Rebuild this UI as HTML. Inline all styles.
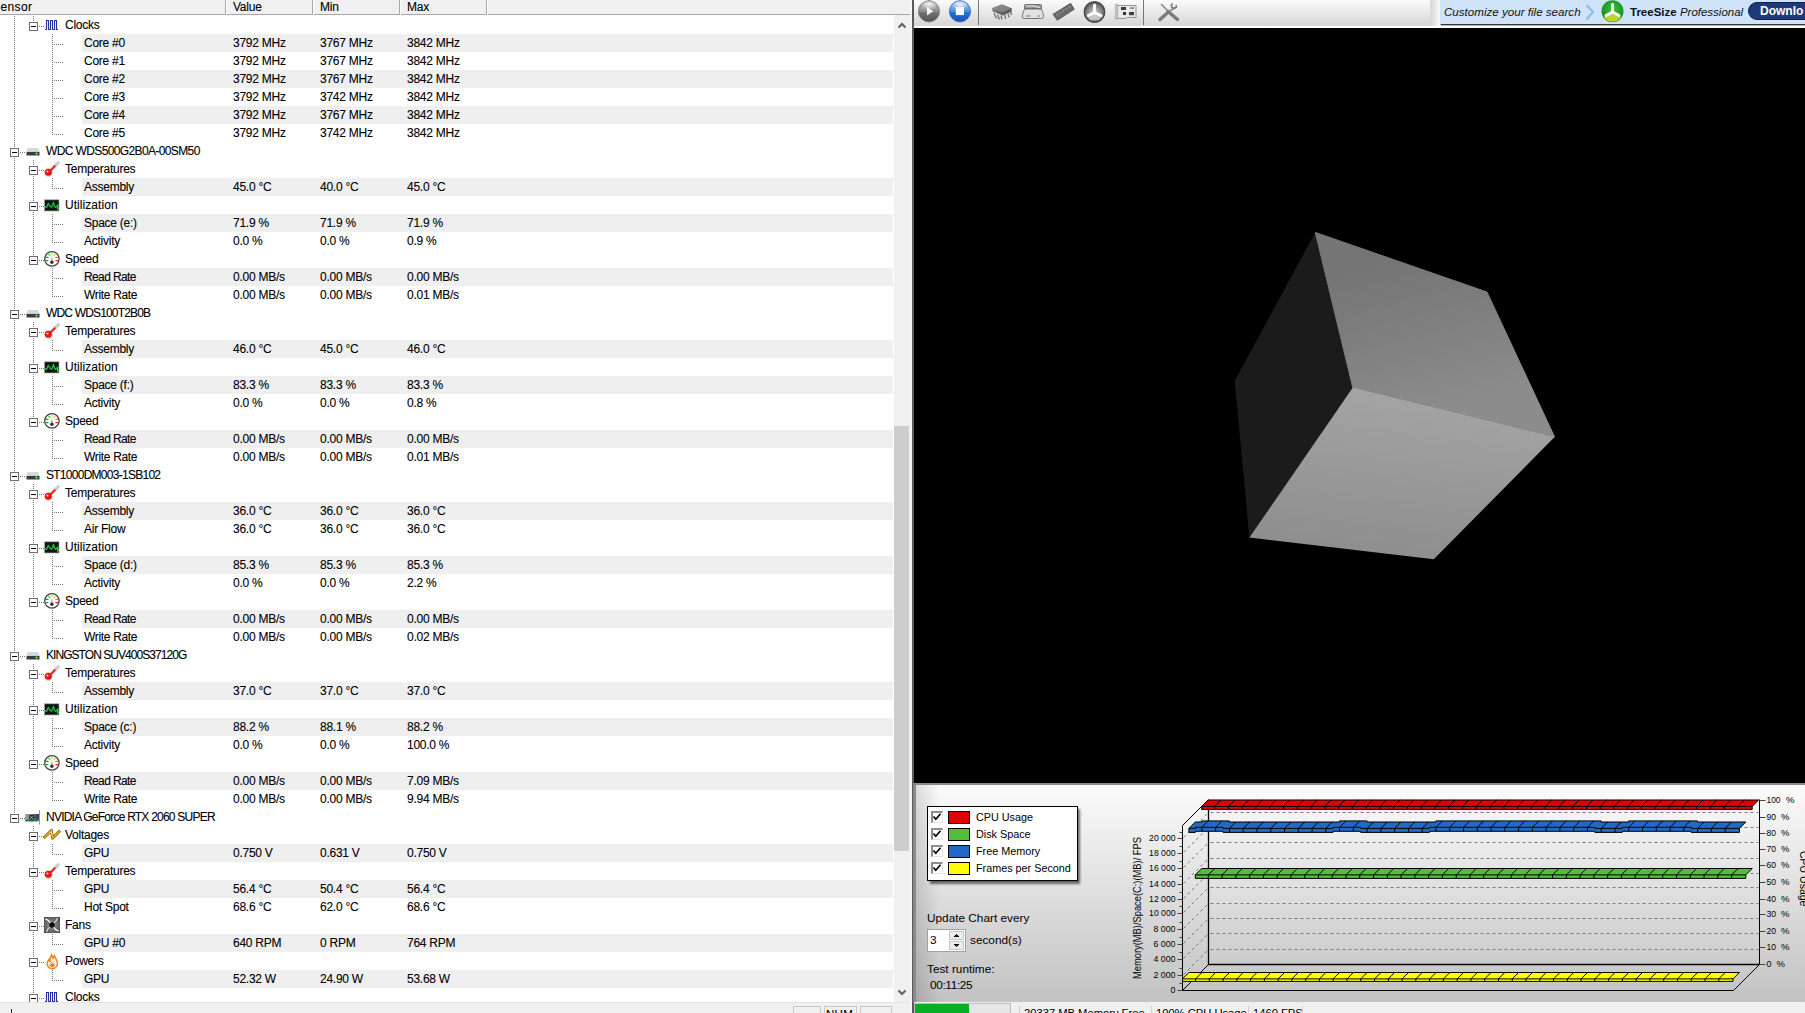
<!DOCTYPE html><html><head><meta charset="utf-8"><style>
*{margin:0;padding:0;box-sizing:border-box}
html,body{width:1805px;height:1013px;overflow:hidden;background:#fff;font-family:"Liberation Sans", sans-serif;}
.a{position:absolute}
.t{position:absolute;font-size:12px;letter-spacing:-0.25px;line-height:18px;white-space:nowrap;color:#000;-webkit-text-stroke:0.1px #000}
.sh{position:absolute;left:82px;width:811px;height:18px;background:#efefef}
.bx{position:absolute;width:9px;height:9px;border:1px solid #6e6e6e;background:#fff}
.bx::after{content:"";position:absolute;left:1px;top:3px;width:5px;height:1px;background:#000}
.vd{position:absolute;width:1px;background:repeating-linear-gradient(to bottom,#777 0 1px,transparent 1px 2px)}
.hd{position:absolute;height:1px;background:repeating-linear-gradient(to right,#777 0 1px,transparent 1px 2px)}

</style></head><body>
<div class="a" style="left:0;top:0;width:912px;height:1013px;background:#fff;overflow:hidden">
<div class="sh" style="top:34px"></div>
<div class="sh" style="top:70px"></div>
<div class="sh" style="top:106px"></div>
<div class="sh" style="top:178px"></div>
<div class="sh" style="top:214px"></div>
<div class="sh" style="top:268px"></div>
<div class="sh" style="top:340px"></div>
<div class="sh" style="top:376px"></div>
<div class="sh" style="top:430px"></div>
<div class="sh" style="top:502px"></div>
<div class="sh" style="top:556px"></div>
<div class="sh" style="top:610px"></div>
<div class="sh" style="top:682px"></div>
<div class="sh" style="top:718px"></div>
<div class="sh" style="top:772px"></div>
<div class="sh" style="top:844px"></div>
<div class="sh" style="top:880px"></div>
<div class="sh" style="top:934px"></div>
<div class="sh" style="top:970px"></div>
<div class="t" style="left:65px;top:16px">Clocks</div>
<svg style="position:absolute;left:43px;top:18px;overflow:visible" width="16" height="16" viewBox="0 0 16 16"><path d="M2 11.5H3.5V2.5H5.5V11.5H7.5V2.5H9.5V11.5H11.5V2.5H13.5V11.5H15" fill="none" stroke="#2530a0" stroke-width="1.1"/></svg>
<div class="t" style="left:84px;top:34px">Core #0</div>
<div class="t" style="left:233px;top:34px">3792 MHz</div>
<div class="t" style="left:320px;top:34px">3767 MHz</div>
<div class="t" style="left:407px;top:34px">3842 MHz</div>
<div class="t" style="left:84px;top:52px">Core #1</div>
<div class="t" style="left:233px;top:52px">3792 MHz</div>
<div class="t" style="left:320px;top:52px">3767 MHz</div>
<div class="t" style="left:407px;top:52px">3842 MHz</div>
<div class="t" style="left:84px;top:70px">Core #2</div>
<div class="t" style="left:233px;top:70px">3792 MHz</div>
<div class="t" style="left:320px;top:70px">3767 MHz</div>
<div class="t" style="left:407px;top:70px">3842 MHz</div>
<div class="t" style="left:84px;top:88px">Core #3</div>
<div class="t" style="left:233px;top:88px">3792 MHz</div>
<div class="t" style="left:320px;top:88px">3742 MHz</div>
<div class="t" style="left:407px;top:88px">3842 MHz</div>
<div class="t" style="left:84px;top:106px">Core #4</div>
<div class="t" style="left:233px;top:106px">3792 MHz</div>
<div class="t" style="left:320px;top:106px">3767 MHz</div>
<div class="t" style="left:407px;top:106px">3842 MHz</div>
<div class="t" style="left:84px;top:124px">Core #5</div>
<div class="t" style="left:233px;top:124px">3792 MHz</div>
<div class="t" style="left:320px;top:124px">3742 MHz</div>
<div class="t" style="left:407px;top:124px">3842 MHz</div>
<div class="t" style="left:46px;top:142px;letter-spacing:-0.623px">WDC WDS500G2B0A-00SM50</div>
<svg style="position:absolute;left:24px;top:144px;overflow:visible" width="16" height="16" viewBox="0 0 16 16"><path d="M4 4 H14 L15.8 7.8 H2.2 Z" fill="#d4d8dd"/><rect x="2" y="7.4" width="14" height="4.6" rx="0.8" fill="#dfe2e5"/><rect x="2.6" y="7.9" width="12.8" height="3.5" fill="#3a3a3a"/><circle cx="12.5" cy="9.6" r="1.1" fill="#55ff55"/></svg>
<div class="t" style="left:65px;top:160px">Temperatures</div>
<svg style="position:absolute;left:43px;top:162px;overflow:visible" width="16" height="16" viewBox="0 0 16 16"><circle cx="5.6" cy="10.6" r="4.3" fill="#9aa6a6" opacity="0.45"/><path d="M6.5 9.5 L15.2 0.9" stroke="#cdcdcd" stroke-width="3.4" stroke-linecap="round"/><path d="M6 10 L12.3 3.7" stroke="#ff0808" stroke-width="1.7"/><circle cx="5.3" cy="10.3" r="3.5" fill="#f21010"/><circle cx="4.4" cy="9.5" r="1.1" fill="#ffc8c8"/></svg>
<div class="t" style="left:84px;top:178px">Assembly</div>
<div class="t" style="left:233px;top:178px">45.0 °C</div>
<div class="t" style="left:320px;top:178px">40.0 °C</div>
<div class="t" style="left:407px;top:178px">45.0 °C</div>
<div class="t" style="left:65px;top:196px;letter-spacing:0.058px">Utilization</div>
<svg style="position:absolute;left:43px;top:198px;overflow:visible" width="16" height="16" viewBox="0 0 16 16"><rect x="1.5" y="1.8" width="14.5" height="11.2" fill="#101410" stroke="#a8a8a8" stroke-width="0.7"/><path d="M1.9 8.3 L3.5 9.5 L5.3 5.3 L6.5 7.5 L8.5 9.2 L9.3 8 L10.5 4.3 L11.5 8 L12.5 9.4 L13.8 8.3 L14.5 7 L14.6 11.4 L15.8 9" fill="none" stroke="#1cc03a" stroke-width="1.3" stroke-linejoin="round"/></svg>
<div class="t" style="left:84px;top:214px">Space (e:)</div>
<div class="t" style="left:233px;top:214px">71.9 %</div>
<div class="t" style="left:320px;top:214px">71.9 %</div>
<div class="t" style="left:407px;top:214px">71.9 %</div>
<div class="t" style="left:84px;top:232px">Activity</div>
<div class="t" style="left:233px;top:232px">0.0 %</div>
<div class="t" style="left:320px;top:232px">0.0 %</div>
<div class="t" style="left:407px;top:232px">0.9 %</div>
<div class="t" style="left:65px;top:250px">Speed</div>
<svg style="position:absolute;left:43px;top:252px;overflow:visible" width="16" height="16" viewBox="0 0 16 16"><circle cx="8.9" cy="6.9" r="7.2" fill="#fdfdfd" stroke="#444" stroke-width="1.3"/><path d="M3 8.6h1.9M3 5.4h1.9" stroke="#1fa01f" stroke-width="1.2" stroke-linecap="round"/><path d="M5.6 2.3l1.3 1.2" stroke="#44e020" stroke-width="1.2" stroke-linecap="round"/><path d="M8.9 1.3v1.5" stroke="#a8e830" stroke-width="1.4"/><path d="M12.3 2.3l-1.3 1.2" stroke="#ffd020" stroke-width="1.2" stroke-linecap="round"/><path d="M14.8 5.4h-1.9" stroke="#ff8010" stroke-width="1.2" stroke-linecap="round"/><path d="M14.8 8.6h-1.9" stroke="#ff1010" stroke-width="1.2" stroke-linecap="round"/><path d="M8.3 10 L8.9 4 L9.5 10 Z" fill="#555"/><circle cx="8.9" cy="10.2" r="1.7" fill="#333"/></svg>
<div class="t" style="left:84px;top:268px;letter-spacing:-0.608px">Read Rate</div>
<div class="t" style="left:233px;top:268px">0.00 MB/s</div>
<div class="t" style="left:320px;top:268px">0.00 MB/s</div>
<div class="t" style="left:407px;top:268px">0.00 MB/s</div>
<div class="t" style="left:84px;top:286px;letter-spacing:-0.329px">Write Rate</div>
<div class="t" style="left:233px;top:286px">0.00 MB/s</div>
<div class="t" style="left:320px;top:286px">0.00 MB/s</div>
<div class="t" style="left:407px;top:286px">0.01 MB/s</div>
<div class="t" style="left:46px;top:304px;letter-spacing:-0.835px">WDC WDS100T2B0B</div>
<svg style="position:absolute;left:24px;top:306px;overflow:visible" width="16" height="16" viewBox="0 0 16 16"><path d="M4 4 H14 L15.8 7.8 H2.2 Z" fill="#d4d8dd"/><rect x="2" y="7.4" width="14" height="4.6" rx="0.8" fill="#dfe2e5"/><rect x="2.6" y="7.9" width="12.8" height="3.5" fill="#3a3a3a"/><circle cx="12.5" cy="9.6" r="1.1" fill="#55ff55"/></svg>
<div class="t" style="left:65px;top:322px">Temperatures</div>
<svg style="position:absolute;left:43px;top:324px;overflow:visible" width="16" height="16" viewBox="0 0 16 16"><circle cx="5.6" cy="10.6" r="4.3" fill="#9aa6a6" opacity="0.45"/><path d="M6.5 9.5 L15.2 0.9" stroke="#cdcdcd" stroke-width="3.4" stroke-linecap="round"/><path d="M6 10 L12.3 3.7" stroke="#ff0808" stroke-width="1.7"/><circle cx="5.3" cy="10.3" r="3.5" fill="#f21010"/><circle cx="4.4" cy="9.5" r="1.1" fill="#ffc8c8"/></svg>
<div class="t" style="left:84px;top:340px">Assembly</div>
<div class="t" style="left:233px;top:340px">46.0 °C</div>
<div class="t" style="left:320px;top:340px">45.0 °C</div>
<div class="t" style="left:407px;top:340px">46.0 °C</div>
<div class="t" style="left:65px;top:358px;letter-spacing:0.058px">Utilization</div>
<svg style="position:absolute;left:43px;top:360px;overflow:visible" width="16" height="16" viewBox="0 0 16 16"><rect x="1.5" y="1.8" width="14.5" height="11.2" fill="#101410" stroke="#a8a8a8" stroke-width="0.7"/><path d="M1.9 8.3 L3.5 9.5 L5.3 5.3 L6.5 7.5 L8.5 9.2 L9.3 8 L10.5 4.3 L11.5 8 L12.5 9.4 L13.8 8.3 L14.5 7 L14.6 11.4 L15.8 9" fill="none" stroke="#1cc03a" stroke-width="1.3" stroke-linejoin="round"/></svg>
<div class="t" style="left:84px;top:376px">Space (f:)</div>
<div class="t" style="left:233px;top:376px">83.3 %</div>
<div class="t" style="left:320px;top:376px">83.3 %</div>
<div class="t" style="left:407px;top:376px">83.3 %</div>
<div class="t" style="left:84px;top:394px">Activity</div>
<div class="t" style="left:233px;top:394px">0.0 %</div>
<div class="t" style="left:320px;top:394px">0.0 %</div>
<div class="t" style="left:407px;top:394px">0.8 %</div>
<div class="t" style="left:65px;top:412px">Speed</div>
<svg style="position:absolute;left:43px;top:414px;overflow:visible" width="16" height="16" viewBox="0 0 16 16"><circle cx="8.9" cy="6.9" r="7.2" fill="#fdfdfd" stroke="#444" stroke-width="1.3"/><path d="M3 8.6h1.9M3 5.4h1.9" stroke="#1fa01f" stroke-width="1.2" stroke-linecap="round"/><path d="M5.6 2.3l1.3 1.2" stroke="#44e020" stroke-width="1.2" stroke-linecap="round"/><path d="M8.9 1.3v1.5" stroke="#a8e830" stroke-width="1.4"/><path d="M12.3 2.3l-1.3 1.2" stroke="#ffd020" stroke-width="1.2" stroke-linecap="round"/><path d="M14.8 5.4h-1.9" stroke="#ff8010" stroke-width="1.2" stroke-linecap="round"/><path d="M14.8 8.6h-1.9" stroke="#ff1010" stroke-width="1.2" stroke-linecap="round"/><path d="M8.3 10 L8.9 4 L9.5 10 Z" fill="#555"/><circle cx="8.9" cy="10.2" r="1.7" fill="#333"/></svg>
<div class="t" style="left:84px;top:430px;letter-spacing:-0.608px">Read Rate</div>
<div class="t" style="left:233px;top:430px">0.00 MB/s</div>
<div class="t" style="left:320px;top:430px">0.00 MB/s</div>
<div class="t" style="left:407px;top:430px">0.00 MB/s</div>
<div class="t" style="left:84px;top:448px;letter-spacing:-0.329px">Write Rate</div>
<div class="t" style="left:233px;top:448px">0.00 MB/s</div>
<div class="t" style="left:320px;top:448px">0.00 MB/s</div>
<div class="t" style="left:407px;top:448px">0.01 MB/s</div>
<div class="t" style="left:46px;top:466px;letter-spacing:-0.730px">ST1000DM003-1SB102</div>
<svg style="position:absolute;left:24px;top:468px;overflow:visible" width="16" height="16" viewBox="0 0 16 16"><path d="M4 4 H14 L15.8 7.8 H2.2 Z" fill="#d4d8dd"/><rect x="2" y="7.4" width="14" height="4.6" rx="0.8" fill="#dfe2e5"/><rect x="2.6" y="7.9" width="12.8" height="3.5" fill="#3a3a3a"/><circle cx="12.5" cy="9.6" r="1.1" fill="#55ff55"/></svg>
<div class="t" style="left:65px;top:484px">Temperatures</div>
<svg style="position:absolute;left:43px;top:486px;overflow:visible" width="16" height="16" viewBox="0 0 16 16"><circle cx="5.6" cy="10.6" r="4.3" fill="#9aa6a6" opacity="0.45"/><path d="M6.5 9.5 L15.2 0.9" stroke="#cdcdcd" stroke-width="3.4" stroke-linecap="round"/><path d="M6 10 L12.3 3.7" stroke="#ff0808" stroke-width="1.7"/><circle cx="5.3" cy="10.3" r="3.5" fill="#f21010"/><circle cx="4.4" cy="9.5" r="1.1" fill="#ffc8c8"/></svg>
<div class="t" style="left:84px;top:502px">Assembly</div>
<div class="t" style="left:233px;top:502px">36.0 °C</div>
<div class="t" style="left:320px;top:502px">36.0 °C</div>
<div class="t" style="left:407px;top:502px">36.0 °C</div>
<div class="t" style="left:84px;top:520px">Air Flow</div>
<div class="t" style="left:233px;top:520px">36.0 °C</div>
<div class="t" style="left:320px;top:520px">36.0 °C</div>
<div class="t" style="left:407px;top:520px">36.0 °C</div>
<div class="t" style="left:65px;top:538px;letter-spacing:0.058px">Utilization</div>
<svg style="position:absolute;left:43px;top:540px;overflow:visible" width="16" height="16" viewBox="0 0 16 16"><rect x="1.5" y="1.8" width="14.5" height="11.2" fill="#101410" stroke="#a8a8a8" stroke-width="0.7"/><path d="M1.9 8.3 L3.5 9.5 L5.3 5.3 L6.5 7.5 L8.5 9.2 L9.3 8 L10.5 4.3 L11.5 8 L12.5 9.4 L13.8 8.3 L14.5 7 L14.6 11.4 L15.8 9" fill="none" stroke="#1cc03a" stroke-width="1.3" stroke-linejoin="round"/></svg>
<div class="t" style="left:84px;top:556px">Space (d:)</div>
<div class="t" style="left:233px;top:556px">85.3 %</div>
<div class="t" style="left:320px;top:556px">85.3 %</div>
<div class="t" style="left:407px;top:556px">85.3 %</div>
<div class="t" style="left:84px;top:574px">Activity</div>
<div class="t" style="left:233px;top:574px">0.0 %</div>
<div class="t" style="left:320px;top:574px">0.0 %</div>
<div class="t" style="left:407px;top:574px">2.2 %</div>
<div class="t" style="left:65px;top:592px">Speed</div>
<svg style="position:absolute;left:43px;top:594px;overflow:visible" width="16" height="16" viewBox="0 0 16 16"><circle cx="8.9" cy="6.9" r="7.2" fill="#fdfdfd" stroke="#444" stroke-width="1.3"/><path d="M3 8.6h1.9M3 5.4h1.9" stroke="#1fa01f" stroke-width="1.2" stroke-linecap="round"/><path d="M5.6 2.3l1.3 1.2" stroke="#44e020" stroke-width="1.2" stroke-linecap="round"/><path d="M8.9 1.3v1.5" stroke="#a8e830" stroke-width="1.4"/><path d="M12.3 2.3l-1.3 1.2" stroke="#ffd020" stroke-width="1.2" stroke-linecap="round"/><path d="M14.8 5.4h-1.9" stroke="#ff8010" stroke-width="1.2" stroke-linecap="round"/><path d="M14.8 8.6h-1.9" stroke="#ff1010" stroke-width="1.2" stroke-linecap="round"/><path d="M8.3 10 L8.9 4 L9.5 10 Z" fill="#555"/><circle cx="8.9" cy="10.2" r="1.7" fill="#333"/></svg>
<div class="t" style="left:84px;top:610px;letter-spacing:-0.608px">Read Rate</div>
<div class="t" style="left:233px;top:610px">0.00 MB/s</div>
<div class="t" style="left:320px;top:610px">0.00 MB/s</div>
<div class="t" style="left:407px;top:610px">0.00 MB/s</div>
<div class="t" style="left:84px;top:628px;letter-spacing:-0.329px">Write Rate</div>
<div class="t" style="left:233px;top:628px">0.00 MB/s</div>
<div class="t" style="left:320px;top:628px">0.00 MB/s</div>
<div class="t" style="left:407px;top:628px">0.02 MB/s</div>
<div class="t" style="left:46px;top:646px;letter-spacing:-0.947px">KINGSTON SUV400S37120G</div>
<svg style="position:absolute;left:24px;top:648px;overflow:visible" width="16" height="16" viewBox="0 0 16 16"><path d="M4 4 H14 L15.8 7.8 H2.2 Z" fill="#d4d8dd"/><rect x="2" y="7.4" width="14" height="4.6" rx="0.8" fill="#dfe2e5"/><rect x="2.6" y="7.9" width="12.8" height="3.5" fill="#3a3a3a"/><circle cx="12.5" cy="9.6" r="1.1" fill="#55ff55"/></svg>
<div class="t" style="left:65px;top:664px">Temperatures</div>
<svg style="position:absolute;left:43px;top:666px;overflow:visible" width="16" height="16" viewBox="0 0 16 16"><circle cx="5.6" cy="10.6" r="4.3" fill="#9aa6a6" opacity="0.45"/><path d="M6.5 9.5 L15.2 0.9" stroke="#cdcdcd" stroke-width="3.4" stroke-linecap="round"/><path d="M6 10 L12.3 3.7" stroke="#ff0808" stroke-width="1.7"/><circle cx="5.3" cy="10.3" r="3.5" fill="#f21010"/><circle cx="4.4" cy="9.5" r="1.1" fill="#ffc8c8"/></svg>
<div class="t" style="left:84px;top:682px">Assembly</div>
<div class="t" style="left:233px;top:682px">37.0 °C</div>
<div class="t" style="left:320px;top:682px">37.0 °C</div>
<div class="t" style="left:407px;top:682px">37.0 °C</div>
<div class="t" style="left:65px;top:700px;letter-spacing:0.058px">Utilization</div>
<svg style="position:absolute;left:43px;top:702px;overflow:visible" width="16" height="16" viewBox="0 0 16 16"><rect x="1.5" y="1.8" width="14.5" height="11.2" fill="#101410" stroke="#a8a8a8" stroke-width="0.7"/><path d="M1.9 8.3 L3.5 9.5 L5.3 5.3 L6.5 7.5 L8.5 9.2 L9.3 8 L10.5 4.3 L11.5 8 L12.5 9.4 L13.8 8.3 L14.5 7 L14.6 11.4 L15.8 9" fill="none" stroke="#1cc03a" stroke-width="1.3" stroke-linejoin="round"/></svg>
<div class="t" style="left:84px;top:718px">Space (c:)</div>
<div class="t" style="left:233px;top:718px">88.2 %</div>
<div class="t" style="left:320px;top:718px">88.1 %</div>
<div class="t" style="left:407px;top:718px">88.2 %</div>
<div class="t" style="left:84px;top:736px">Activity</div>
<div class="t" style="left:233px;top:736px">0.0 %</div>
<div class="t" style="left:320px;top:736px">0.0 %</div>
<div class="t" style="left:407px;top:736px">100.0 %</div>
<div class="t" style="left:65px;top:754px">Speed</div>
<svg style="position:absolute;left:43px;top:756px;overflow:visible" width="16" height="16" viewBox="0 0 16 16"><circle cx="8.9" cy="6.9" r="7.2" fill="#fdfdfd" stroke="#444" stroke-width="1.3"/><path d="M3 8.6h1.9M3 5.4h1.9" stroke="#1fa01f" stroke-width="1.2" stroke-linecap="round"/><path d="M5.6 2.3l1.3 1.2" stroke="#44e020" stroke-width="1.2" stroke-linecap="round"/><path d="M8.9 1.3v1.5" stroke="#a8e830" stroke-width="1.4"/><path d="M12.3 2.3l-1.3 1.2" stroke="#ffd020" stroke-width="1.2" stroke-linecap="round"/><path d="M14.8 5.4h-1.9" stroke="#ff8010" stroke-width="1.2" stroke-linecap="round"/><path d="M14.8 8.6h-1.9" stroke="#ff1010" stroke-width="1.2" stroke-linecap="round"/><path d="M8.3 10 L8.9 4 L9.5 10 Z" fill="#555"/><circle cx="8.9" cy="10.2" r="1.7" fill="#333"/></svg>
<div class="t" style="left:84px;top:772px;letter-spacing:-0.608px">Read Rate</div>
<div class="t" style="left:233px;top:772px">0.00 MB/s</div>
<div class="t" style="left:320px;top:772px">0.00 MB/s</div>
<div class="t" style="left:407px;top:772px">7.09 MB/s</div>
<div class="t" style="left:84px;top:790px;letter-spacing:-0.329px">Write Rate</div>
<div class="t" style="left:233px;top:790px">0.00 MB/s</div>
<div class="t" style="left:320px;top:790px">0.00 MB/s</div>
<div class="t" style="left:407px;top:790px">9.94 MB/s</div>
<div class="t" style="left:46px;top:808px;letter-spacing:-0.771px">NVIDIA GeForce RTX 2060 SUPER</div>
<svg style="position:absolute;left:24px;top:810px;overflow:visible" width="16" height="16" viewBox="0 0 16 16"><defs><linearGradient id="gpg" x1="0" y1="0" x2="1" y2="0"><stop offset="0" stop-color="#a4acb4"/><stop offset="0.5" stop-color="#6c7480"/><stop offset="1" stop-color="#30363c"/></linearGradient></defs><rect x="1" y="4" width="14" height="5.8" fill="url(#gpg)"/><rect x="5.2" y="5" width="4.6" height="4.8" fill="#262626"/><path d="M5.9 5.7l3.2 3.4M9.1 5.7l-3.2 3.4" stroke="#d0d0d0" stroke-width="0.7"/><rect x="1" y="9.6" width="14" height="1.5" fill="#0e7a52"/><path d="M2 11.6h2.2M5 11.6h5M11 11.6h2.2" stroke="#c89a20" stroke-width="1"/><path d="M15.4 14.5 V0.5 H16" stroke="#8c909a" stroke-width="1" fill="none"/></svg>
<div class="t" style="left:65px;top:826px">Voltages</div>
<svg style="position:absolute;left:43px;top:828px;overflow:visible" width="16" height="16" viewBox="0 0 16 16"><path d="M1.6 9.3 L8.4 2.6 L9.6 10.2 L16.2 3.6" fill="none" stroke="#5a4a10" stroke-width="2.8" stroke-linejoin="round" stroke-linecap="round"/><path d="M1.6 9.3 L8.4 2.6 L9.6 10.2 L16.2 3.6" fill="none" stroke="#f2a812" stroke-width="1.7" stroke-linejoin="round" stroke-linecap="round"/><path d="M6.5 5.5 L8.4 3.8 L9.2 7.5" fill="none" stroke="#fff2a0" stroke-width="0.9"/></svg>
<div class="t" style="left:84px;top:844px">GPU</div>
<div class="t" style="left:233px;top:844px">0.750 V</div>
<div class="t" style="left:320px;top:844px">0.631 V</div>
<div class="t" style="left:407px;top:844px">0.750 V</div>
<div class="t" style="left:65px;top:862px">Temperatures</div>
<svg style="position:absolute;left:43px;top:864px;overflow:visible" width="16" height="16" viewBox="0 0 16 16"><circle cx="5.6" cy="10.6" r="4.3" fill="#9aa6a6" opacity="0.45"/><path d="M6.5 9.5 L15.2 0.9" stroke="#cdcdcd" stroke-width="3.4" stroke-linecap="round"/><path d="M6 10 L12.3 3.7" stroke="#ff0808" stroke-width="1.7"/><circle cx="5.3" cy="10.3" r="3.5" fill="#f21010"/><circle cx="4.4" cy="9.5" r="1.1" fill="#ffc8c8"/></svg>
<div class="t" style="left:84px;top:880px">GPU</div>
<div class="t" style="left:233px;top:880px">56.4 °C</div>
<div class="t" style="left:320px;top:880px">50.4 °C</div>
<div class="t" style="left:407px;top:880px">56.4 °C</div>
<div class="t" style="left:84px;top:898px">Hot Spot</div>
<div class="t" style="left:233px;top:898px">68.6 °C</div>
<div class="t" style="left:320px;top:898px">62.0 °C</div>
<div class="t" style="left:407px;top:898px">68.6 °C</div>
<div class="t" style="left:65px;top:916px">Fans</div>
<svg style="position:absolute;left:43px;top:918px;overflow:visible" width="16" height="16" viewBox="0 0 16 16"><defs><radialGradient id="fng" cx="0.5" cy="0.5" r="0.75"><stop offset="0" stop-color="#9a9a9a"/><stop offset="1" stop-color="#3e3e3e"/></radialGradient></defs><rect x="1" y="-1" width="16" height="16" fill="url(#fng)"/><path d="M2.5 1 Q6 2 7.5 5 M15.5 13 Q12 12 10.5 9" stroke="#f4f4f4" stroke-width="1.5" fill="none"/><path d="M14.5 0 Q13.5 3.5 11 5 M3.5 14 Q4.5 10.5 7 9" stroke="#d4d4d4" stroke-width="1.3" fill="none"/><circle cx="9" cy="7" r="2.7" fill="#0e0e0e"/></svg>
<div class="t" style="left:84px;top:934px">GPU #0</div>
<div class="t" style="left:233px;top:934px">640 RPM</div>
<div class="t" style="left:320px;top:934px">0 RPM</div>
<div class="t" style="left:407px;top:934px">764 RPM</div>
<div class="t" style="left:65px;top:952px">Powers</div>
<svg style="position:absolute;left:43px;top:954px;overflow:visible" width="16" height="16" viewBox="0 0 16 16"><path d="M8.5 0.5 C9.5 2.5 9 3.5 10 4.5 C10.5 3.5 10.5 2.5 11.5 1.5 C12 4 14.5 6 14.5 9.5 C14.5 12.5 12 14.8 9.3 14.8 C6.5 14.8 4.2 12.5 4.2 9.8 C4.2 7.5 5.2 6.5 6 5.5 C6 6.5 6.5 7.3 7.2 7.5 C6.8 5.5 7.5 3 8.5 0.5 Z" fill="#fff3e6" stroke="#f47a12" stroke-width="1.3"/><path d="M6.5 11.5 C6.5 9.5 8 8.5 9.3 8.2 C10.5 8.5 12 9.5 12 11.5" fill="none" stroke="#f8a060" stroke-width="0.8"/><circle cx="9.3" cy="11.3" r="2" fill="#f47a12"/></svg>
<div class="t" style="left:84px;top:970px">GPU</div>
<div class="t" style="left:233px;top:970px">52.32 W</div>
<div class="t" style="left:320px;top:970px">24.90 W</div>
<div class="t" style="left:407px;top:970px">53.68 W</div>
<div class="t" style="left:65px;top:988px">Clocks</div>
<svg style="position:absolute;left:43px;top:990px;overflow:visible" width="16" height="16" viewBox="0 0 16 16"><path d="M2 11.5H3.5V2.5H5.5V11.5H7.5V2.5H9.5V11.5H11.5V2.5H13.5V11.5H15" fill="none" stroke="#2530a0" stroke-width="1.1"/></svg>
<div class="vd" style="left:14px;top:16px;height:132px"></div>
<div class="vd" style="left:14px;top:158px;height:152px"></div>
<div class="vd" style="left:14px;top:320px;height:152px"></div>
<div class="vd" style="left:14px;top:482px;height:170px"></div>
<div class="vd" style="left:14px;top:662px;height:152px"></div>
<div class="vd" style="left:33px;top:16px;height:6px"></div>
<div class="vd" style="left:33px;top:160px;height:6px"></div>
<div class="vd" style="left:33px;top:176px;height:26px"></div>
<div class="vd" style="left:33px;top:212px;height:44px"></div>
<div class="vd" style="left:33px;top:322px;height:6px"></div>
<div class="vd" style="left:33px;top:338px;height:26px"></div>
<div class="vd" style="left:33px;top:374px;height:44px"></div>
<div class="vd" style="left:33px;top:484px;height:6px"></div>
<div class="vd" style="left:33px;top:500px;height:44px"></div>
<div class="vd" style="left:33px;top:554px;height:44px"></div>
<div class="vd" style="left:33px;top:664px;height:6px"></div>
<div class="vd" style="left:33px;top:680px;height:26px"></div>
<div class="vd" style="left:33px;top:716px;height:44px"></div>
<div class="vd" style="left:33px;top:826px;height:6px"></div>
<div class="vd" style="left:33px;top:842px;height:26px"></div>
<div class="vd" style="left:33px;top:878px;height:44px"></div>
<div class="vd" style="left:33px;top:932px;height:26px"></div>
<div class="vd" style="left:33px;top:968px;height:26px"></div>
<div class="vd" style="left:52px;top:34px;height:101px"></div>
<div class="hd" style="left:52px;top:44px;width:12px"></div>
<div class="hd" style="left:52px;top:62px;width:12px"></div>
<div class="hd" style="left:52px;top:80px;width:12px"></div>
<div class="hd" style="left:52px;top:98px;width:12px"></div>
<div class="hd" style="left:52px;top:116px;width:12px"></div>
<div class="hd" style="left:52px;top:134px;width:12px"></div>
<div class="vd" style="left:52px;top:178px;height:11px"></div>
<div class="hd" style="left:52px;top:188px;width:12px"></div>
<div class="vd" style="left:52px;top:214px;height:29px"></div>
<div class="hd" style="left:52px;top:224px;width:12px"></div>
<div class="hd" style="left:52px;top:242px;width:12px"></div>
<div class="vd" style="left:52px;top:268px;height:29px"></div>
<div class="hd" style="left:52px;top:278px;width:12px"></div>
<div class="hd" style="left:52px;top:296px;width:12px"></div>
<div class="vd" style="left:52px;top:340px;height:11px"></div>
<div class="hd" style="left:52px;top:350px;width:12px"></div>
<div class="vd" style="left:52px;top:376px;height:29px"></div>
<div class="hd" style="left:52px;top:386px;width:12px"></div>
<div class="hd" style="left:52px;top:404px;width:12px"></div>
<div class="vd" style="left:52px;top:430px;height:29px"></div>
<div class="hd" style="left:52px;top:440px;width:12px"></div>
<div class="hd" style="left:52px;top:458px;width:12px"></div>
<div class="vd" style="left:52px;top:502px;height:29px"></div>
<div class="hd" style="left:52px;top:512px;width:12px"></div>
<div class="hd" style="left:52px;top:530px;width:12px"></div>
<div class="vd" style="left:52px;top:556px;height:29px"></div>
<div class="hd" style="left:52px;top:566px;width:12px"></div>
<div class="hd" style="left:52px;top:584px;width:12px"></div>
<div class="vd" style="left:52px;top:610px;height:29px"></div>
<div class="hd" style="left:52px;top:620px;width:12px"></div>
<div class="hd" style="left:52px;top:638px;width:12px"></div>
<div class="vd" style="left:52px;top:682px;height:11px"></div>
<div class="hd" style="left:52px;top:692px;width:12px"></div>
<div class="vd" style="left:52px;top:718px;height:29px"></div>
<div class="hd" style="left:52px;top:728px;width:12px"></div>
<div class="hd" style="left:52px;top:746px;width:12px"></div>
<div class="vd" style="left:52px;top:772px;height:29px"></div>
<div class="hd" style="left:52px;top:782px;width:12px"></div>
<div class="hd" style="left:52px;top:800px;width:12px"></div>
<div class="vd" style="left:52px;top:844px;height:11px"></div>
<div class="hd" style="left:52px;top:854px;width:12px"></div>
<div class="vd" style="left:52px;top:880px;height:29px"></div>
<div class="hd" style="left:52px;top:890px;width:12px"></div>
<div class="hd" style="left:52px;top:908px;width:12px"></div>
<div class="vd" style="left:52px;top:934px;height:11px"></div>
<div class="hd" style="left:52px;top:944px;width:12px"></div>
<div class="vd" style="left:52px;top:970px;height:11px"></div>
<div class="hd" style="left:52px;top:980px;width:12px"></div>
<div class="bx" style="left:29px;top:22px"></div>
<div class="hd" style="left:39px;top:26px;width:5px"></div>
<div class="bx" style="left:10px;top:148px"></div>
<div class="hd" style="left:20px;top:152px;width:5px"></div>
<div class="bx" style="left:29px;top:166px"></div>
<div class="hd" style="left:39px;top:170px;width:5px"></div>
<div class="bx" style="left:29px;top:202px"></div>
<div class="hd" style="left:39px;top:206px;width:5px"></div>
<div class="bx" style="left:29px;top:256px"></div>
<div class="hd" style="left:39px;top:260px;width:5px"></div>
<div class="bx" style="left:10px;top:310px"></div>
<div class="hd" style="left:20px;top:314px;width:5px"></div>
<div class="bx" style="left:29px;top:328px"></div>
<div class="hd" style="left:39px;top:332px;width:5px"></div>
<div class="bx" style="left:29px;top:364px"></div>
<div class="hd" style="left:39px;top:368px;width:5px"></div>
<div class="bx" style="left:29px;top:418px"></div>
<div class="hd" style="left:39px;top:422px;width:5px"></div>
<div class="bx" style="left:10px;top:472px"></div>
<div class="hd" style="left:20px;top:476px;width:5px"></div>
<div class="bx" style="left:29px;top:490px"></div>
<div class="hd" style="left:39px;top:494px;width:5px"></div>
<div class="bx" style="left:29px;top:544px"></div>
<div class="hd" style="left:39px;top:548px;width:5px"></div>
<div class="bx" style="left:29px;top:598px"></div>
<div class="hd" style="left:39px;top:602px;width:5px"></div>
<div class="bx" style="left:10px;top:652px"></div>
<div class="hd" style="left:20px;top:656px;width:5px"></div>
<div class="bx" style="left:29px;top:670px"></div>
<div class="hd" style="left:39px;top:674px;width:5px"></div>
<div class="bx" style="left:29px;top:706px"></div>
<div class="hd" style="left:39px;top:710px;width:5px"></div>
<div class="bx" style="left:29px;top:760px"></div>
<div class="hd" style="left:39px;top:764px;width:5px"></div>
<div class="bx" style="left:10px;top:814px"></div>
<div class="hd" style="left:20px;top:818px;width:5px"></div>
<div class="bx" style="left:29px;top:832px"></div>
<div class="hd" style="left:39px;top:836px;width:5px"></div>
<div class="bx" style="left:29px;top:868px"></div>
<div class="hd" style="left:39px;top:872px;width:5px"></div>
<div class="bx" style="left:29px;top:922px"></div>
<div class="hd" style="left:39px;top:926px;width:5px"></div>
<div class="bx" style="left:29px;top:958px"></div>
<div class="hd" style="left:39px;top:962px;width:5px"></div>
<div class="bx" style="left:29px;top:994px"></div>
<div class="hd" style="left:39px;top:998px;width:5px"></div>
<div class="a" style="left:0;top:0;width:910px;height:15px;background:#f0f0f0;border-bottom:1px solid #a8a8a8"></div>
<div class="a" style="left:225px;top:0;width:1px;height:15px;background:#a8a8a8"></div>
<div class="a" style="left:226px;top:0;width:1px;height:15px;background:#fff"></div>
<div class="a" style="left:312px;top:0;width:1px;height:15px;background:#a8a8a8"></div>
<div class="a" style="left:313px;top:0;width:1px;height:15px;background:#fff"></div>
<div class="a" style="left:399px;top:0;width:1px;height:15px;background:#a8a8a8"></div>
<div class="a" style="left:400px;top:0;width:1px;height:15px;background:#fff"></div>
<div class="a" style="left:486px;top:0;width:1px;height:15px;background:#a8a8a8"></div>
<div class="a" style="left:487px;top:0;width:1px;height:15px;background:#fff"></div>
<div class="t" style="left:-8px;top:-2px;line-height:18px;font-size:12px;letter-spacing:0.4px">Sensor</div>
<div class="t" style="left:233px;top:-2px;line-height:18px">Value</div>
<div class="t" style="left:320px;top:-2px;line-height:18px">Min</div>
<div class="t" style="left:407px;top:-2px;line-height:18px">Max</div>
<div class="a" style="left:894px;top:15px;width:16px;height:987px;background:#f0f0f0"></div>
<div class="a" style="left:894px;top:426px;width:15px;height:425px;background:#cdcdcd"></div>
<svg class="a" style="left:894px;top:15px" width="16" height="17"><path d="M4.5 12.5 L8 9 L11.5 12.5" fill="none" stroke="#606060" stroke-width="2"/></svg>
<svg class="a" style="left:894px;top:985px" width="16" height="17"><path d="M4.5 5.5 L8 9 L11.5 5.5" fill="none" stroke="#606060" stroke-width="2"/></svg>
<div class="a" style="left:0;top:1002px;width:912px;height:11px;background:#f0f0f0;border-top:1px solid #e3e3e3"></div>
<div class="a" style="left:793px;top:1006px;width:28px;height:7px;border:1px solid #c8c8c8;border-bottom:none"></div>
<div class="a" style="left:824px;top:1006px;width:33px;height:7px;border:1px solid #c8c8c8;border-bottom:none"></div>
<div class="a" style="left:860px;top:1006px;width:32px;height:7px;border:1px solid #c8c8c8;border-bottom:none"></div>
<div class="a" style="left:11px;top:1009px;width:1px;height:4px;background:#222"></div>
<div class="t" style="left:826px;top:1007px;font-size:11.5px;line-height:14px;letter-spacing:0.3px">NUM</div>
<div class="a" style="left:910px;top:0;width:2px;height:1013px;background:#f4f4f4"></div>
</div>
<div class="a" style="left:912px;top:0;width:2px;height:1013px;background:#5a5a5a"></div>
<div class="a" style="left:914px;top:0;width:891px;height:26px;background:linear-gradient(#fbfbfb,#d6d6d6)"></div>
<div class="a" style="left:914px;top:26px;width:891px;height:2px;background:#fff"></div>
<svg class="a" style="left:914px;top:0" width="891" height="27" viewBox="914 0 891 27">
<defs>
<linearGradient id="pg" x1="0" y1="0" x2="0" y2="1"><stop offset="0" stop-color="#c0c0c0"/><stop offset="0.5" stop-color="#8e8e8e"/><stop offset="0.58" stop-color="#6e6e6e"/><stop offset="1" stop-color="#555"/></linearGradient>
<linearGradient id="bg" x1="0" y1="0" x2="0" y2="1"><stop offset="0" stop-color="#a8ccf5"/><stop offset="0.5" stop-color="#4f8fe2"/><stop offset="0.58" stop-color="#2468d2"/><stop offset="1" stop-color="#1a52b8"/></linearGradient><radialGradient id="hl" cx="0.5" cy="0.3" r="0.6"><stop offset="0" stop-color="#fff" stop-opacity="0.85"/><stop offset="1" stop-color="#fff" stop-opacity="0"/></radialGradient>
<radialGradient id="tg" cx="0.5" cy="0.55" r="0.55"><stop offset="0" stop-color="#d8d8d8"/><stop offset="0.6" stop-color="#8a8a8a"/><stop offset="1" stop-color="#4a4a4a"/></radialGradient>
<linearGradient id="hdg" x1="0" y1="0" x2="0" y2="1"><stop offset="0" stop-color="#777"/><stop offset="1" stop-color="#eee"/></linearGradient>
</defs>
<rect x="928" y="0" width="2" height="1.5" fill="#aaa"/>
<circle cx="929" cy="11.3" r="10.6" fill="url(#pg)" stroke="#6a6a6a" stroke-width="0.7"/>
<ellipse cx="929" cy="6.5" rx="7.5" ry="5" fill="url(#hl)"/>
<path d="M927 7 L933.2 11.2 L927 15.6 Z" fill="#f6f6f6"/>
<rect x="959" y="0" width="2" height="1.5" fill="#aaa"/>
<circle cx="960" cy="11.3" r="10.6" fill="url(#bg)" stroke="#1d58c0" stroke-width="0.7"/>
<ellipse cx="960" cy="6.5" rx="7.5" ry="5" fill="url(#hl)"/>
<rect x="955.8" y="7" width="8.2" height="8.1" fill="#fafafa"/>
<path d="M978.5 0 V25" stroke="#777" stroke-width="1"/>
<defs><linearGradient id="chg" x1="0" y1="0" x2="1" y2="1"><stop offset="0" stop-color="#9a9a9a"/><stop offset="1" stop-color="#444"/></linearGradient></defs>
<path d="M994 13 L996.5 18.5 M997.5 14.5 L999.5 19.5 M1001 15.5 L1002 19.5 M1005 15 L1005.5 19 M1008 13.5 L1009 17.5 M1010.5 11.5 L1011.5 15" stroke="#7a7a7a" stroke-width="1.5"/>
<path d="M992 8 L1002 4.3 L1012 8.6 L1011.5 11.5 L1003 15.5 L992.5 11.5 Z" fill="url(#chg)"/>
<path d="M993.5 8.3 L1002 5.3 L1010.5 8.8 L1003 12.3 Z" fill="#8a8a8a" opacity="0.8"/>
<path d="M1025.5 4.5 H1040.5 Q1041.5 4.5 1041.5 5.5 V8.5 H1024.5 V5.5 Q1024.5 4.5 1025.5 4.5 Z" fill="#9a9a9a" stroke="#666" stroke-width="0.9"/>
<path d="M1026 6 Q1033 5 1040 7.5" stroke="#e8e8e8" stroke-width="1" fill="none"/>
<path d="M1024.5 9 H1041.5 Q1043.5 14 1043.5 16.5 Q1043.5 18.5 1041.5 18.5 H1024 Q1022.2 18.5 1022.2 16.5 Q1022.2 14 1024.5 9 Z" fill="#e2e2e2" stroke="#6a6a6a" stroke-width="0.9"/>
<path d="M1026 16 H1030.5 M1037.5 16 H1040" stroke="#777" stroke-width="1.1"/>
<path d="M1053 14.3 L1070.6 3.2 L1074.3 9.3 L1057.3 20.3 Z" fill="#6a6a6a" stroke="#4a4a4a" stroke-width="0.7"/>
<path d="M1056.5 15.3 L1070.5 6.3" stroke="#8e8e8e" stroke-width="1.6" stroke-dasharray="2 1.5"/>
<circle cx="1094.5" cy="12" r="10.6" fill="url(#tg)"/>
<circle cx="1094.5" cy="12" r="10.2" fill="none" stroke="#4a4a4a" stroke-width="1.2"/>
<path d="M1086.5 15 L1094.5 12.5 L1102.5 15 L1099 20 L1090 20 Z" fill="#d0d0d0" opacity="0.8"/>
<path d="M1094.5 5 V12.5 L1088.5 15.5 M1094.5 12.5 L1101 15.5" stroke="#ffffff" stroke-width="3" stroke-linecap="round" stroke-linejoin="round" fill="none"/>
<path d="M1116.5 5.5 H1136 V17.5 H1126.5 L1126 18.5 H1117.5 Z" fill="#e8e8e8" stroke="#8a8a8a" stroke-width="0.9"/>
<rect x="1115.3" y="4" width="2.4" height="15.5" rx="1" fill="#c4c4c4" stroke="#999" stroke-width="0.5"/>
<rect x="1121" y="7" width="5" height="3" fill="#3e3e3e"/><rect x="1130" y="7.2" width="4" height="1.8" fill="#888"/>
<rect x="1123" y="12" width="3" height="3" fill="#333"/><rect x="1129" y="12" width="5" height="3.2" fill="#3e3e3e"/>
<path d="M1143.5 0 V25" stroke="#777" stroke-width="1"/>
<path d="M1161.5 4.5 L1169 12" stroke="#8a8a8a" stroke-width="1.6" stroke-linecap="round"/>
<path d="M1168 11.5 L1177.5 19.5" stroke="#7c7c7c" stroke-width="3.4" stroke-linecap="round"/>
<path d="M1169 11.5 L1160 19.5" stroke="#7c7c7c" stroke-width="3.4" stroke-linecap="round"/>
<path d="M1175.5 7.5 L1169 11.5" stroke="#8a8a8a" stroke-width="1.6"/>
<path d="M1172.5 3.5 Q1170.5 5.5 1172 7.5 Q1174.5 9 1176.5 7 L1176 5" fill="none" stroke="#777" stroke-width="1.5"/>
</svg>
<div class="a" style="left:1430px;top:0;width:10px;height:26px;background:linear-gradient(to right,#d6d6d6,#fafafa)"></div>
<div class="a" style="left:1440px;top:0;width:365px;height:24px;background:#cfe3f9;box-shadow:1px 1px 1px #333"></div>
<div class="a" style="left:1444px;top:4px;font-size:11.6px;line-height:16px;font-style:italic;white-space:nowrap;color:#111">Customize your file search</div>
<svg class="a" style="left:1580px;top:0" width="225" height="25" viewBox="1580 0 225 25">
<defs><radialGradient id="lg" cx="0.5" cy="0.4" r="0.6"><stop offset="0" stop-color="#3cbf3c"/><stop offset="1" stop-color="#138a1f"/></radialGradient></defs>
<path d="M1586.5 5 L1593 12 L1586.5 19.5" fill="none" stroke="#8fc0e6" stroke-width="2.2"/>
<circle cx="1612.5" cy="11.3" r="11" fill="url(#lg)"/>
<path d="M1604 17 A10 10 0 0 0 1621 17 L1612.5 12 Z" fill="#b7d630"/>
<path d="M1612.5 4.5 V12 L1606 15.5 M1612.5 12 L1619 15.5" stroke="#fff" stroke-width="3" stroke-linecap="round" fill="none"/>
<rect x="1748.5" y="2.5" width="80" height="17" rx="8.5" fill="#1e3a7a" stroke="#0e2355" stroke-width="1"/>
</svg>
<div class="a" style="left:1630px;top:4px;font-size:11.5px;line-height:16px;white-space:nowrap;color:#111"><b>TreeSize</b> <i>Professional</i></div>
<div class="a" style="left:1760px;top:3px;font-size:12px;line-height:16px;white-space:nowrap;color:#fff;font-weight:bold">Downlo</div>
<div class="a" style="left:914px;top:28px;width:891px;height:755px;background:#000"></div>
<svg class="a" style="left:914px;top:28px" width="891" height="755" viewBox="914 28 891 755">
<defs>
<linearGradient id="ft" x1="1401" y1="262" x2="1440" y2="412" gradientUnits="userSpaceOnUse"><stop offset="0" stop-color="#757575"/><stop offset="1" stop-color="#8c8c8c"/></linearGradient>
<linearGradient id="fb" x1="1400" y1="400" x2="1380" y2="555" gradientUnits="userSpaceOnUse"><stop offset="0" stop-color="#a3a3a3"/><stop offset="1" stop-color="#8e8e8e"/></linearGradient>
</defs>
<polygon points="1315.3,232.4 1352.8,387.6 1249.4,537.6 1234.7,380.9" fill="#1b1b1b"/>
<polygon points="1315.3,232.4 1487,292 1554.6,437 1352.8,387.6" fill="url(#ft)" stroke="url(#ft)" stroke-width="1"/>
<polygon points="1352.8,387.6 1554.6,437 1433.8,559.3 1249.4,537.6" fill="url(#fb)"/>
</svg>
<div class="a" style="left:912px;top:783px;width:893px;height:219px;background:#8a8a8a"></div>
<div class="a" style="left:912px;top:783px;width:1px;height:219px;background:#5a5a5a"></div>
<div class="a" style="left:916px;top:785px;width:889px;height:217px;background:linear-gradient(#fbfbfb,#c2c2c2)"></div>
<div class="a" style="left:916px;top:785px;width:24px;height:217px;background:linear-gradient(to right,rgba(0,0,0,0.13),rgba(0,0,0,0))"></div>
<div class="a" style="left:930px;top:809px;width:150px;height:75px;background:rgba(0,0,0,0.55);filter:blur(1px)"></div>
<div class="a" style="left:927px;top:806px;width:151px;height:75px;background:#fff;border:1.5px solid #000"></div>
<div class="a" style="left:931px;top:811px;width:12px;height:12px;background:#fff;border-style:solid;border-width:2px 1px 1px 2px;border-color:#8c8c8c #e2e2e2 #e2e2e2 #8c8c8c"></div>
<svg class="a" style="left:931px;top:811px" width="12" height="12"><path d="M2.5 5.5 L4.8 8.3 L9.5 2.8" fill="none" stroke="#000" stroke-width="1.7"/></svg>
<div class="a" style="left:948px;top:811px;width:22px;height:13px;background:#e00000;border:1px solid #000"></div>
<div class="a" style="left:976px;top:809px;font-size:10.8px;line-height:16px;white-space:nowrap">CPU Usage</div>
<div class="a" style="left:931px;top:828px;width:12px;height:12px;background:#fff;border-style:solid;border-width:2px 1px 1px 2px;border-color:#8c8c8c #e2e2e2 #e2e2e2 #8c8c8c"></div>
<svg class="a" style="left:931px;top:828px" width="12" height="12"><path d="M2.5 5.5 L4.8 8.3 L9.5 2.8" fill="none" stroke="#000" stroke-width="1.7"/></svg>
<div class="a" style="left:948px;top:828px;width:22px;height:13px;background:#4fc038;border:1px solid #000"></div>
<div class="a" style="left:976px;top:826px;font-size:10.8px;line-height:16px;white-space:nowrap">Disk Space</div>
<div class="a" style="left:931px;top:845px;width:12px;height:12px;background:#fff;border-style:solid;border-width:2px 1px 1px 2px;border-color:#8c8c8c #e2e2e2 #e2e2e2 #8c8c8c"></div>
<svg class="a" style="left:931px;top:845px" width="12" height="12"><path d="M2.5 5.5 L4.8 8.3 L9.5 2.8" fill="none" stroke="#000" stroke-width="1.7"/></svg>
<div class="a" style="left:948px;top:845px;width:22px;height:13px;background:#2169c4;border:1px solid #000"></div>
<div class="a" style="left:976px;top:843px;font-size:10.8px;line-height:16px;white-space:nowrap">Free Memory</div>
<div class="a" style="left:931px;top:862px;width:12px;height:12px;background:#fff;border-style:solid;border-width:2px 1px 1px 2px;border-color:#8c8c8c #e2e2e2 #e2e2e2 #8c8c8c"></div>
<svg class="a" style="left:931px;top:862px" width="12" height="12"><path d="M2.5 5.5 L4.8 8.3 L9.5 2.8" fill="none" stroke="#000" stroke-width="1.7"/></svg>
<div class="a" style="left:948px;top:862px;width:22px;height:13px;background:#ffff00;border:1px solid #000"></div>
<div class="a" style="left:976px;top:860px;font-size:10.8px;line-height:16px;white-space:nowrap">Frames per Second</div>
<div class="a" style="left:927px;top:910px;font-size:11.8px;line-height:16px;white-space:nowrap;color:#000">Update Chart every</div>
<div class="a" style="left:927px;top:929px;width:39px;height:23px;background:#fff;border:1px solid #a0a0a0"></div>
<div class="a" style="left:930px;top:932px;font-size:11.8px;line-height:16px">3</div>
<div class="a" style="left:949px;top:931px;width:15px;height:9px;background:#ececec;border:1px solid #c6c6c6"></div>
<div class="a" style="left:949px;top:941px;width:15px;height:9px;background:#ececec;border:1px solid #c6c6c6"></div>
<svg class="a" style="left:949px;top:931px" width="15" height="20"><path d="M4.5 6 L7.5 3 L10.5 6 Z" fill="#000"/><path d="M4.5 13 L7.5 16 L10.5 13 Z" fill="#000"/></svg>
<div class="a" style="left:970px;top:932px;font-size:11.8px;line-height:16px;white-space:nowrap">second(s)</div>
<div class="a" style="left:927px;top:961px;font-size:11.8px;line-height:16px;white-space:nowrap">Test runtime:</div>
<div class="a" style="left:930px;top:977px;font-size:11.8px;letter-spacing:-0.35px;line-height:16px;white-space:nowrap">00:11:25</div>
<svg class="a" style="left:914px;top:783px" width="891" height="219" viewBox="914 783 891 219" font-family="Liberation Sans, sans-serif">
<path d="M1182.5 825.5 V990.5 H1733.5 L1759.5 964.5 V799.5" stroke="#000" stroke-width="1" fill="none"/>
<path d="M1182.5 825.5 L1208.5 799.5" stroke="#000" stroke-width="1" fill="none"/>
<path d="M1182.5 990.5 L1208.5 964.5" stroke="#000" stroke-width="1" fill="none"/>
<path d="M1208.5 809.5 V964.5 H1759.5" stroke="#000" stroke-width="1.3" fill="none"/>
<path d="M1210.5 949.5 H1758.5" stroke="#7a7a7a" stroke-width="1" stroke-dasharray="3 3" fill="none"/>
<path d="M1183.5 974.5 L1208.5 949.5" stroke="#7a7a7a" stroke-width="1" stroke-dasharray="3 3" fill="none"/>
<path d="M1210.5 933.5 H1758.5" stroke="#7a7a7a" stroke-width="1" stroke-dasharray="3 3" fill="none"/>
<path d="M1183.5 958.5 L1208.5 933.5" stroke="#7a7a7a" stroke-width="1" stroke-dasharray="3 3" fill="none"/>
<path d="M1210.5 918.5 H1758.5" stroke="#7a7a7a" stroke-width="1" stroke-dasharray="3 3" fill="none"/>
<path d="M1183.5 943.5 L1208.5 918.5" stroke="#7a7a7a" stroke-width="1" stroke-dasharray="3 3" fill="none"/>
<path d="M1210.5 903.5 H1758.5" stroke="#7a7a7a" stroke-width="1" stroke-dasharray="3 3" fill="none"/>
<path d="M1183.5 928.5 L1208.5 903.5" stroke="#7a7a7a" stroke-width="1" stroke-dasharray="3 3" fill="none"/>
<path d="M1210.5 887.5 H1758.5" stroke="#7a7a7a" stroke-width="1" stroke-dasharray="3 3" fill="none"/>
<path d="M1183.5 912.5 L1208.5 887.5" stroke="#7a7a7a" stroke-width="1" stroke-dasharray="3 3" fill="none"/>
<path d="M1210.5 873.5 H1758.5" stroke="#7a7a7a" stroke-width="1" stroke-dasharray="3 3" fill="none"/>
<path d="M1183.5 898.5 L1208.5 873.5" stroke="#7a7a7a" stroke-width="1" stroke-dasharray="3 3" fill="none"/>
<path d="M1210.5 858.5 H1758.5" stroke="#7a7a7a" stroke-width="1" stroke-dasharray="3 3" fill="none"/>
<path d="M1183.5 883.5 L1208.5 858.5" stroke="#7a7a7a" stroke-width="1" stroke-dasharray="3 3" fill="none"/>
<path d="M1210.5 842.5 H1758.5" stroke="#7a7a7a" stroke-width="1" stroke-dasharray="3 3" fill="none"/>
<path d="M1183.5 867.5 L1208.5 842.5" stroke="#7a7a7a" stroke-width="1" stroke-dasharray="3 3" fill="none"/>
<path d="M1210.5 827.5 H1758.5" stroke="#7a7a7a" stroke-width="1" stroke-dasharray="3 3" fill="none"/>
<path d="M1183.5 852.5 L1208.5 827.5" stroke="#7a7a7a" stroke-width="1" stroke-dasharray="3 3" fill="none"/>
<path d="M1210.5 812.5 H1758.5" stroke="#7a7a7a" stroke-width="1" stroke-dasharray="3 3" fill="none"/>
<path d="M1183.5 837.5 L1208.5 812.5" stroke="#7a7a7a" stroke-width="1" stroke-dasharray="3 3" fill="none"/>
<path d="M1177.5 990.5 H1182.5" stroke="#444" stroke-width="1"/>
<text x="1175.5" y="993.0" font-size="9.5" text-anchor="end" textLength="5" lengthAdjust="spacingAndGlyphs">0</text>
<path d="M1179.5 983.5 H1182.5" stroke="#444" stroke-width="1"/>
<path d="M1177.5 975.5 H1182.5" stroke="#444" stroke-width="1"/>
<text x="1175.5" y="978.0" font-size="9.5" text-anchor="end" textLength="22.0" lengthAdjust="spacingAndGlyphs">2 000</text>
<path d="M1179.5 968.5 H1182.5" stroke="#444" stroke-width="1"/>
<path d="M1177.5 959.5 H1182.5" stroke="#444" stroke-width="1"/>
<text x="1175.5" y="962.0" font-size="9.5" text-anchor="end" textLength="22.0" lengthAdjust="spacingAndGlyphs">4 000</text>
<path d="M1179.5 952.5 H1182.5" stroke="#444" stroke-width="1"/>
<path d="M1177.5 944.5 H1182.5" stroke="#444" stroke-width="1"/>
<text x="1175.5" y="947.0" font-size="9.5" text-anchor="end" textLength="22.0" lengthAdjust="spacingAndGlyphs">6 000</text>
<path d="M1179.5 937.5 H1182.5" stroke="#444" stroke-width="1"/>
<path d="M1177.5 929.5 H1182.5" stroke="#444" stroke-width="1"/>
<text x="1175.5" y="932.0" font-size="9.5" text-anchor="end" textLength="22.0" lengthAdjust="spacingAndGlyphs">8 000</text>
<path d="M1179.5 922.5 H1182.5" stroke="#444" stroke-width="1"/>
<path d="M1177.5 913.5 H1182.5" stroke="#444" stroke-width="1"/>
<text x="1175.5" y="916.0" font-size="9.5" text-anchor="end" textLength="26.400000000000002" lengthAdjust="spacingAndGlyphs">10 000</text>
<path d="M1179.5 906.5 H1182.5" stroke="#444" stroke-width="1"/>
<path d="M1177.5 899.5 H1182.5" stroke="#444" stroke-width="1"/>
<text x="1175.5" y="902.0" font-size="9.5" text-anchor="end" textLength="26.400000000000002" lengthAdjust="spacingAndGlyphs">12 000</text>
<path d="M1179.5 892.5 H1182.5" stroke="#444" stroke-width="1"/>
<path d="M1177.5 884.5 H1182.5" stroke="#444" stroke-width="1"/>
<text x="1175.5" y="887.0" font-size="9.5" text-anchor="end" textLength="26.400000000000002" lengthAdjust="spacingAndGlyphs">14 000</text>
<path d="M1179.5 876.5 H1182.5" stroke="#444" stroke-width="1"/>
<path d="M1177.5 868.5 H1182.5" stroke="#444" stroke-width="1"/>
<text x="1175.5" y="871.0" font-size="9.5" text-anchor="end" textLength="26.400000000000002" lengthAdjust="spacingAndGlyphs">16 000</text>
<path d="M1179.5 861.5 H1182.5" stroke="#444" stroke-width="1"/>
<path d="M1177.5 853.5 H1182.5" stroke="#444" stroke-width="1"/>
<text x="1175.5" y="856.0" font-size="9.5" text-anchor="end" textLength="26.400000000000002" lengthAdjust="spacingAndGlyphs">18 000</text>
<path d="M1179.5 846.5 H1182.5" stroke="#444" stroke-width="1"/>
<path d="M1177.5 838.5 H1182.5" stroke="#444" stroke-width="1"/>
<text x="1175.5" y="841.0" font-size="9.5" text-anchor="end" textLength="26.400000000000002" lengthAdjust="spacingAndGlyphs">20 000</text>
<path d="M1179.5 832.5 H1182.5" stroke="#444" stroke-width="1"/>
<path d="M1759.5 964.5 H1765.5" stroke="#444" stroke-width="1"/>
<text x="1766.5" y="966.5" font-size="9.5" textLength="5" lengthAdjust="spacingAndGlyphs">0</text>
<text x="1776.5" y="966.5" font-size="9.5">%</text>
<path d="M1759.5 947.5 H1765.5" stroke="#444" stroke-width="1"/>
<text x="1766.5" y="949.5" font-size="9.5" textLength="9.5" lengthAdjust="spacingAndGlyphs">10</text>
<text x="1781.0" y="949.5" font-size="9.5">%</text>
<path d="M1759.5 931.5 H1765.5" stroke="#444" stroke-width="1"/>
<text x="1766.5" y="933.5" font-size="9.5" textLength="9.5" lengthAdjust="spacingAndGlyphs">20</text>
<text x="1781.0" y="933.5" font-size="9.5">%</text>
<path d="M1759.5 914.5 H1765.5" stroke="#444" stroke-width="1"/>
<text x="1766.5" y="916.5" font-size="9.5" textLength="9.5" lengthAdjust="spacingAndGlyphs">30</text>
<text x="1781.0" y="916.5" font-size="9.5">%</text>
<path d="M1759.5 899.5 H1765.5" stroke="#444" stroke-width="1"/>
<text x="1766.5" y="901.5" font-size="9.5" textLength="9.5" lengthAdjust="spacingAndGlyphs">40</text>
<text x="1781.0" y="901.5" font-size="9.5">%</text>
<path d="M1759.5 882.5 H1765.5" stroke="#444" stroke-width="1"/>
<text x="1766.5" y="884.5" font-size="9.5" textLength="9.5" lengthAdjust="spacingAndGlyphs">50</text>
<text x="1781.0" y="884.5" font-size="9.5">%</text>
<path d="M1759.5 865.5 H1765.5" stroke="#444" stroke-width="1"/>
<text x="1766.5" y="867.5" font-size="9.5" textLength="9.5" lengthAdjust="spacingAndGlyphs">60</text>
<text x="1781.0" y="867.5" font-size="9.5">%</text>
<path d="M1759.5 849.5 H1765.5" stroke="#444" stroke-width="1"/>
<text x="1766.5" y="851.5" font-size="9.5" textLength="9.5" lengthAdjust="spacingAndGlyphs">70</text>
<text x="1781.0" y="851.5" font-size="9.5">%</text>
<path d="M1759.5 833.5 H1765.5" stroke="#444" stroke-width="1"/>
<text x="1766.5" y="835.5" font-size="9.5" textLength="9.5" lengthAdjust="spacingAndGlyphs">80</text>
<text x="1781.0" y="835.5" font-size="9.5">%</text>
<path d="M1759.5 817.5 H1765.5" stroke="#444" stroke-width="1"/>
<text x="1766.5" y="819.5" font-size="9.5" textLength="9.5" lengthAdjust="spacingAndGlyphs">90</text>
<text x="1781.0" y="819.5" font-size="9.5">%</text>
<path d="M1759.5 800.5 H1765.5" stroke="#444" stroke-width="1"/>
<text x="1766.5" y="802.5" font-size="9.5" textLength="14" lengthAdjust="spacingAndGlyphs">100</text>
<text x="1786.0" y="802.5" font-size="9.5">%</text>
<text transform="translate(1141 979) rotate(-90)" font-size="10.5" textLength="142" lengthAdjust="spacingAndGlyphs">Memory(MB)/Space(C:)(MB)/ FPS</text>
<text transform="translate(1799.5 851) rotate(90)" font-size="10.5">CPU Usage</text>
<polygon points="1208.10,800.0 1758.60,800.0 1752.20,806.4 1201.70,806.4" fill="#e00000"/>
<polygon points="1201.70,806.4 1752.20,806.4 1752.20,809.4 1201.70,809.4" fill="#e00000"/>
<path d="M1208.10 800.0 H1758.60" stroke="#000" stroke-width="1" fill="none"/>
<path d="M1201.70 806.4 H1752.20" stroke="#000" stroke-width="1" fill="none"/>
<path d="M1201.70 809.4 H1752.20" stroke="#000" stroke-width="1" fill="none"/>
<path d="M1208.10 800.0 L1201.70 806.4 V809.4 M1758.60 800.0 L1752.20 806.4 V809.4" stroke="#000" stroke-width="1" fill="none"/>
<path d="M1221.10 800.0 L1214.70 806.4 V809.4" stroke="#000" stroke-width="1" fill="none"/>
<path d="M1234.87 800.0 L1228.47 806.4 V809.4" stroke="#000" stroke-width="1" fill="none"/>
<path d="M1248.64 800.0 L1242.24 806.4 V809.4" stroke="#000" stroke-width="1" fill="none"/>
<path d="M1262.41 800.0 L1256.01 806.4 V809.4" stroke="#000" stroke-width="1" fill="none"/>
<path d="M1276.18 800.0 L1269.78 806.4 V809.4" stroke="#000" stroke-width="1" fill="none"/>
<path d="M1289.95 800.0 L1283.55 806.4 V809.4" stroke="#000" stroke-width="1" fill="none"/>
<path d="M1303.72 800.0 L1297.32 806.4 V809.4" stroke="#000" stroke-width="1" fill="none"/>
<path d="M1317.49 800.0 L1311.09 806.4 V809.4" stroke="#000" stroke-width="1" fill="none"/>
<path d="M1331.26 800.0 L1324.86 806.4 V809.4" stroke="#000" stroke-width="1" fill="none"/>
<path d="M1345.03 800.0 L1338.63 806.4 V809.4" stroke="#000" stroke-width="1" fill="none"/>
<path d="M1358.80 800.0 L1352.40 806.4 V809.4" stroke="#000" stroke-width="1" fill="none"/>
<path d="M1372.57 800.0 L1366.17 806.4 V809.4" stroke="#000" stroke-width="1" fill="none"/>
<path d="M1386.34 800.0 L1379.94 806.4 V809.4" stroke="#000" stroke-width="1" fill="none"/>
<path d="M1400.11 800.0 L1393.71 806.4 V809.4" stroke="#000" stroke-width="1" fill="none"/>
<path d="M1413.88 800.0 L1407.48 806.4 V809.4" stroke="#000" stroke-width="1" fill="none"/>
<path d="M1427.65 800.0 L1421.25 806.4 V809.4" stroke="#000" stroke-width="1" fill="none"/>
<path d="M1441.42 800.0 L1435.02 806.4 V809.4" stroke="#000" stroke-width="1" fill="none"/>
<path d="M1455.19 800.0 L1448.79 806.4 V809.4" stroke="#000" stroke-width="1" fill="none"/>
<path d="M1468.96 800.0 L1462.56 806.4 V809.4" stroke="#000" stroke-width="1" fill="none"/>
<path d="M1482.73 800.0 L1476.33 806.4 V809.4" stroke="#000" stroke-width="1" fill="none"/>
<path d="M1496.50 800.0 L1490.10 806.4 V809.4" stroke="#000" stroke-width="1" fill="none"/>
<path d="M1510.27 800.0 L1503.87 806.4 V809.4" stroke="#000" stroke-width="1" fill="none"/>
<path d="M1524.04 800.0 L1517.64 806.4 V809.4" stroke="#000" stroke-width="1" fill="none"/>
<path d="M1537.81 800.0 L1531.41 806.4 V809.4" stroke="#000" stroke-width="1" fill="none"/>
<path d="M1551.58 800.0 L1545.18 806.4 V809.4" stroke="#000" stroke-width="1" fill="none"/>
<path d="M1565.35 800.0 L1558.95 806.4 V809.4" stroke="#000" stroke-width="1" fill="none"/>
<path d="M1579.12 800.0 L1572.72 806.4 V809.4" stroke="#000" stroke-width="1" fill="none"/>
<path d="M1592.89 800.0 L1586.49 806.4 V809.4" stroke="#000" stroke-width="1" fill="none"/>
<path d="M1606.66 800.0 L1600.26 806.4 V809.4" stroke="#000" stroke-width="1" fill="none"/>
<path d="M1620.43 800.0 L1614.03 806.4 V809.4" stroke="#000" stroke-width="1" fill="none"/>
<path d="M1634.20 800.0 L1627.80 806.4 V809.4" stroke="#000" stroke-width="1" fill="none"/>
<path d="M1647.97 800.0 L1641.57 806.4 V809.4" stroke="#000" stroke-width="1" fill="none"/>
<path d="M1661.74 800.0 L1655.34 806.4 V809.4" stroke="#000" stroke-width="1" fill="none"/>
<path d="M1675.51 800.0 L1669.11 806.4 V809.4" stroke="#000" stroke-width="1" fill="none"/>
<path d="M1689.28 800.0 L1682.88 806.4 V809.4" stroke="#000" stroke-width="1" fill="none"/>
<path d="M1703.05 800.0 L1696.65 806.4 V809.4" stroke="#000" stroke-width="1" fill="none"/>
<path d="M1716.82 800.0 L1710.42 806.4 V809.4" stroke="#000" stroke-width="1" fill="none"/>
<path d="M1730.59 800.0 L1724.19 806.4 V809.4" stroke="#000" stroke-width="1" fill="none"/>
<path d="M1744.36 800.0 L1737.96 806.4 V809.4" stroke="#000" stroke-width="1" fill="none"/>
<polygon points="1201.70,868.5 1752.20,868.5 1745.80,874.9 1195.30,874.9" fill="#4fc038"/>
<polygon points="1195.30,874.9 1745.80,874.9 1745.80,878.4 1195.30,878.4" fill="#4fc038"/>
<path d="M1201.70 868.5 H1752.20" stroke="#000" stroke-width="1" fill="none"/>
<path d="M1195.30 874.9 H1745.80" stroke="#000" stroke-width="1" fill="none"/>
<path d="M1195.30 878.4 H1745.80" stroke="#000" stroke-width="1" fill="none"/>
<path d="M1201.70 868.5 L1195.30 874.9 V878.4 M1752.20 868.5 L1745.80 874.9 V878.4" stroke="#000" stroke-width="1" fill="none"/>
<path d="M1214.70 868.5 L1208.30 874.9 V878.4" stroke="#000" stroke-width="1" fill="none"/>
<path d="M1228.47 868.5 L1222.07 874.9 V878.4" stroke="#000" stroke-width="1" fill="none"/>
<path d="M1242.24 868.5 L1235.84 874.9 V878.4" stroke="#000" stroke-width="1" fill="none"/>
<path d="M1256.01 868.5 L1249.61 874.9 V878.4" stroke="#000" stroke-width="1" fill="none"/>
<path d="M1269.78 868.5 L1263.38 874.9 V878.4" stroke="#000" stroke-width="1" fill="none"/>
<path d="M1283.55 868.5 L1277.15 874.9 V878.4" stroke="#000" stroke-width="1" fill="none"/>
<path d="M1297.32 868.5 L1290.92 874.9 V878.4" stroke="#000" stroke-width="1" fill="none"/>
<path d="M1311.09 868.5 L1304.69 874.9 V878.4" stroke="#000" stroke-width="1" fill="none"/>
<path d="M1324.86 868.5 L1318.46 874.9 V878.4" stroke="#000" stroke-width="1" fill="none"/>
<path d="M1338.63 868.5 L1332.23 874.9 V878.4" stroke="#000" stroke-width="1" fill="none"/>
<path d="M1352.40 868.5 L1346.00 874.9 V878.4" stroke="#000" stroke-width="1" fill="none"/>
<path d="M1366.17 868.5 L1359.77 874.9 V878.4" stroke="#000" stroke-width="1" fill="none"/>
<path d="M1379.94 868.5 L1373.54 874.9 V878.4" stroke="#000" stroke-width="1" fill="none"/>
<path d="M1393.71 868.5 L1387.31 874.9 V878.4" stroke="#000" stroke-width="1" fill="none"/>
<path d="M1407.48 868.5 L1401.08 874.9 V878.4" stroke="#000" stroke-width="1" fill="none"/>
<path d="M1421.25 868.5 L1414.85 874.9 V878.4" stroke="#000" stroke-width="1" fill="none"/>
<path d="M1435.02 868.5 L1428.62 874.9 V878.4" stroke="#000" stroke-width="1" fill="none"/>
<path d="M1448.79 868.5 L1442.39 874.9 V878.4" stroke="#000" stroke-width="1" fill="none"/>
<path d="M1462.56 868.5 L1456.16 874.9 V878.4" stroke="#000" stroke-width="1" fill="none"/>
<path d="M1476.33 868.5 L1469.93 874.9 V878.4" stroke="#000" stroke-width="1" fill="none"/>
<path d="M1490.10 868.5 L1483.70 874.9 V878.4" stroke="#000" stroke-width="1" fill="none"/>
<path d="M1503.87 868.5 L1497.47 874.9 V878.4" stroke="#000" stroke-width="1" fill="none"/>
<path d="M1517.64 868.5 L1511.24 874.9 V878.4" stroke="#000" stroke-width="1" fill="none"/>
<path d="M1531.41 868.5 L1525.01 874.9 V878.4" stroke="#000" stroke-width="1" fill="none"/>
<path d="M1545.18 868.5 L1538.78 874.9 V878.4" stroke="#000" stroke-width="1" fill="none"/>
<path d="M1558.95 868.5 L1552.55 874.9 V878.4" stroke="#000" stroke-width="1" fill="none"/>
<path d="M1572.72 868.5 L1566.32 874.9 V878.4" stroke="#000" stroke-width="1" fill="none"/>
<path d="M1586.49 868.5 L1580.09 874.9 V878.4" stroke="#000" stroke-width="1" fill="none"/>
<path d="M1600.26 868.5 L1593.86 874.9 V878.4" stroke="#000" stroke-width="1" fill="none"/>
<path d="M1614.03 868.5 L1607.63 874.9 V878.4" stroke="#000" stroke-width="1" fill="none"/>
<path d="M1627.80 868.5 L1621.40 874.9 V878.4" stroke="#000" stroke-width="1" fill="none"/>
<path d="M1641.57 868.5 L1635.17 874.9 V878.4" stroke="#000" stroke-width="1" fill="none"/>
<path d="M1655.34 868.5 L1648.94 874.9 V878.4" stroke="#000" stroke-width="1" fill="none"/>
<path d="M1669.11 868.5 L1662.71 874.9 V878.4" stroke="#000" stroke-width="1" fill="none"/>
<path d="M1682.88 868.5 L1676.48 874.9 V878.4" stroke="#000" stroke-width="1" fill="none"/>
<path d="M1696.65 868.5 L1690.25 874.9 V878.4" stroke="#000" stroke-width="1" fill="none"/>
<path d="M1710.42 868.5 L1704.02 874.9 V878.4" stroke="#000" stroke-width="1" fill="none"/>
<path d="M1724.19 868.5 L1717.79 874.9 V878.4" stroke="#000" stroke-width="1" fill="none"/>
<path d="M1737.96 868.5 L1731.56 874.9 V878.4" stroke="#000" stroke-width="1" fill="none"/>
<polygon points="1195.30,822.0 1201.80,822.0 1201.80,820.9 1229.34,820.9 1229.34,822.0 1339.50,822.0 1339.50,820.9 1367.04,820.9 1367.04,822.0 1435.89,822.0 1435.89,820.9 1601.13,820.9 1601.13,822.0 1628.67,822.0 1628.67,820.9 1697.52,820.9 1697.52,822.0 1745.80,822.0 1739.40,828.4 1691.12,828.4 1691.12,827.3 1622.27,827.3 1622.27,828.4 1594.73,828.4 1594.73,827.3 1429.49,827.3 1429.49,828.4 1360.64,828.4 1360.64,827.3 1333.10,827.3 1333.10,828.4 1222.94,828.4 1222.94,827.3 1195.40,827.3 1195.40,828.4 1188.90,828.4" fill="#2169c4"/>
<polygon points="1188.90,828.4 1195.40,828.4 1195.40,827.3 1222.94,827.3 1222.94,828.4 1333.10,828.4 1333.10,827.3 1360.64,827.3 1360.64,828.4 1429.49,828.4 1429.49,827.3 1594.73,827.3 1594.73,828.4 1622.27,828.4 1622.27,827.3 1691.12,827.3 1691.12,828.4 1739.40,828.4 1739.40,832.4 1691.12,832.4 1691.12,831.3 1622.27,831.3 1622.27,832.4 1594.73,832.4 1594.73,831.3 1429.49,831.3 1429.49,832.4 1360.64,832.4 1360.64,831.3 1333.10,831.3 1333.10,832.4 1222.94,832.4 1222.94,831.3 1195.40,831.3 1195.40,832.4 1188.90,832.4" fill="#2169c4"/>
<path d="M1195.30 822.0 H1201.80 V820.9 H1229.34 V822.0 H1339.50 V820.9 H1367.04 V822.0 H1435.89 V820.9 H1601.13 V822.0 H1628.67 V820.9 H1697.52 V822.0 H1745.80" stroke="#000" stroke-width="1" fill="none"/>
<path d="M1188.90 828.4 H1195.40 V827.3 H1222.94 V828.4 H1333.10 V827.3 H1360.64 V828.4 H1429.49 V827.3 H1594.73 V828.4 H1622.27 V827.3 H1691.12 V828.4 H1739.40" stroke="#000" stroke-width="1" fill="none"/>
<path d="M1188.90 832.4 H1195.40 V831.3 H1222.94 V832.4 H1333.10 V831.3 H1360.64 V832.4 H1429.49 V831.3 H1594.73 V832.4 H1622.27 V831.3 H1691.12 V832.4 H1739.40" stroke="#000" stroke-width="1" fill="none"/>
<path d="M1195.30 822.0 L1188.90 828.4 V832.4 M1745.80 822.0 L1739.40 828.4 V832.4" stroke="#000" stroke-width="1" fill="none"/>
<path d="M1208.30 820.9 L1201.90 827.3 V831.3" stroke="#000" stroke-width="1" fill="none"/>
<path d="M1222.07 820.9 L1215.67 827.3 V831.3" stroke="#000" stroke-width="1" fill="none"/>
<path d="M1235.84 822.0 L1229.44 828.4 V832.4" stroke="#000" stroke-width="1" fill="none"/>
<path d="M1249.61 822.0 L1243.21 828.4 V832.4" stroke="#000" stroke-width="1" fill="none"/>
<path d="M1263.38 822.0 L1256.98 828.4 V832.4" stroke="#000" stroke-width="1" fill="none"/>
<path d="M1277.15 822.0 L1270.75 828.4 V832.4" stroke="#000" stroke-width="1" fill="none"/>
<path d="M1290.92 822.0 L1284.52 828.4 V832.4" stroke="#000" stroke-width="1" fill="none"/>
<path d="M1304.69 822.0 L1298.29 828.4 V832.4" stroke="#000" stroke-width="1" fill="none"/>
<path d="M1318.46 822.0 L1312.06 828.4 V832.4" stroke="#000" stroke-width="1" fill="none"/>
<path d="M1332.23 822.0 L1325.83 828.4 V832.4" stroke="#000" stroke-width="1" fill="none"/>
<path d="M1346.00 820.9 L1339.60 827.3 V831.3" stroke="#000" stroke-width="1" fill="none"/>
<path d="M1359.77 820.9 L1353.37 827.3 V831.3" stroke="#000" stroke-width="1" fill="none"/>
<path d="M1373.54 822.0 L1367.14 828.4 V832.4" stroke="#000" stroke-width="1" fill="none"/>
<path d="M1387.31 822.0 L1380.91 828.4 V832.4" stroke="#000" stroke-width="1" fill="none"/>
<path d="M1401.08 822.0 L1394.68 828.4 V832.4" stroke="#000" stroke-width="1" fill="none"/>
<path d="M1414.85 822.0 L1408.45 828.4 V832.4" stroke="#000" stroke-width="1" fill="none"/>
<path d="M1428.62 822.0 L1422.22 828.4 V832.4" stroke="#000" stroke-width="1" fill="none"/>
<path d="M1442.39 820.9 L1435.99 827.3 V831.3" stroke="#000" stroke-width="1" fill="none"/>
<path d="M1456.16 820.9 L1449.76 827.3 V831.3" stroke="#000" stroke-width="1" fill="none"/>
<path d="M1469.93 820.9 L1463.53 827.3 V831.3" stroke="#000" stroke-width="1" fill="none"/>
<path d="M1483.70 820.9 L1477.30 827.3 V831.3" stroke="#000" stroke-width="1" fill="none"/>
<path d="M1497.47 820.9 L1491.07 827.3 V831.3" stroke="#000" stroke-width="1" fill="none"/>
<path d="M1511.24 820.9 L1504.84 827.3 V831.3" stroke="#000" stroke-width="1" fill="none"/>
<path d="M1525.01 820.9 L1518.61 827.3 V831.3" stroke="#000" stroke-width="1" fill="none"/>
<path d="M1538.78 820.9 L1532.38 827.3 V831.3" stroke="#000" stroke-width="1" fill="none"/>
<path d="M1552.55 820.9 L1546.15 827.3 V831.3" stroke="#000" stroke-width="1" fill="none"/>
<path d="M1566.32 820.9 L1559.92 827.3 V831.3" stroke="#000" stroke-width="1" fill="none"/>
<path d="M1580.09 820.9 L1573.69 827.3 V831.3" stroke="#000" stroke-width="1" fill="none"/>
<path d="M1593.86 820.9 L1587.46 827.3 V831.3" stroke="#000" stroke-width="1" fill="none"/>
<path d="M1607.63 822.0 L1601.23 828.4 V832.4" stroke="#000" stroke-width="1" fill="none"/>
<path d="M1621.40 822.0 L1615.00 828.4 V832.4" stroke="#000" stroke-width="1" fill="none"/>
<path d="M1635.17 820.9 L1628.77 827.3 V831.3" stroke="#000" stroke-width="1" fill="none"/>
<path d="M1648.94 820.9 L1642.54 827.3 V831.3" stroke="#000" stroke-width="1" fill="none"/>
<path d="M1662.71 820.9 L1656.31 827.3 V831.3" stroke="#000" stroke-width="1" fill="none"/>
<path d="M1676.48 820.9 L1670.08 827.3 V831.3" stroke="#000" stroke-width="1" fill="none"/>
<path d="M1690.25 820.9 L1683.85 827.3 V831.3" stroke="#000" stroke-width="1" fill="none"/>
<path d="M1704.02 822.0 L1697.62 828.4 V832.4" stroke="#000" stroke-width="1" fill="none"/>
<path d="M1717.79 822.0 L1711.39 828.4 V832.4" stroke="#000" stroke-width="1" fill="none"/>
<path d="M1731.56 822.0 L1725.16 828.4 V832.4" stroke="#000" stroke-width="1" fill="none"/>
<polygon points="1188.90,972.5 1739.40,972.5 1733.00,978.9 1182.50,978.9" fill="#ffff00"/>
<polygon points="1182.50,978.9 1733.00,978.9 1733.00,981.4 1182.50,981.4" fill="#ffff00"/>
<path d="M1188.90 972.5 H1739.40" stroke="#000" stroke-width="1" fill="none"/>
<path d="M1182.50 978.9 H1733.00" stroke="#000" stroke-width="1" fill="none"/>
<path d="M1182.50 981.4 H1733.00" stroke="#000" stroke-width="1" fill="none"/>
<path d="M1188.90 972.5 L1182.50 978.9 V981.4 M1739.40 972.5 L1733.00 978.9 V981.4" stroke="#000" stroke-width="1" fill="none"/>
<path d="M1201.90 972.5 L1195.50 978.9 V981.4" stroke="#000" stroke-width="1" fill="none"/>
<path d="M1215.67 972.5 L1209.27 978.9 V981.4" stroke="#000" stroke-width="1" fill="none"/>
<path d="M1229.44 972.5 L1223.04 978.9 V981.4" stroke="#000" stroke-width="1" fill="none"/>
<path d="M1243.21 972.5 L1236.81 978.9 V981.4" stroke="#000" stroke-width="1" fill="none"/>
<path d="M1256.98 972.5 L1250.58 978.9 V981.4" stroke="#000" stroke-width="1" fill="none"/>
<path d="M1270.75 972.5 L1264.35 978.9 V981.4" stroke="#000" stroke-width="1" fill="none"/>
<path d="M1284.52 972.5 L1278.12 978.9 V981.4" stroke="#000" stroke-width="1" fill="none"/>
<path d="M1298.29 972.5 L1291.89 978.9 V981.4" stroke="#000" stroke-width="1" fill="none"/>
<path d="M1312.06 972.5 L1305.66 978.9 V981.4" stroke="#000" stroke-width="1" fill="none"/>
<path d="M1325.83 972.5 L1319.43 978.9 V981.4" stroke="#000" stroke-width="1" fill="none"/>
<path d="M1339.60 972.5 L1333.20 978.9 V981.4" stroke="#000" stroke-width="1" fill="none"/>
<path d="M1353.37 972.5 L1346.97 978.9 V981.4" stroke="#000" stroke-width="1" fill="none"/>
<path d="M1367.14 972.5 L1360.74 978.9 V981.4" stroke="#000" stroke-width="1" fill="none"/>
<path d="M1380.91 972.5 L1374.51 978.9 V981.4" stroke="#000" stroke-width="1" fill="none"/>
<path d="M1394.68 972.5 L1388.28 978.9 V981.4" stroke="#000" stroke-width="1" fill="none"/>
<path d="M1408.45 972.5 L1402.05 978.9 V981.4" stroke="#000" stroke-width="1" fill="none"/>
<path d="M1422.22 972.5 L1415.82 978.9 V981.4" stroke="#000" stroke-width="1" fill="none"/>
<path d="M1435.99 972.5 L1429.59 978.9 V981.4" stroke="#000" stroke-width="1" fill="none"/>
<path d="M1449.76 972.5 L1443.36 978.9 V981.4" stroke="#000" stroke-width="1" fill="none"/>
<path d="M1463.53 972.5 L1457.13 978.9 V981.4" stroke="#000" stroke-width="1" fill="none"/>
<path d="M1477.30 972.5 L1470.90 978.9 V981.4" stroke="#000" stroke-width="1" fill="none"/>
<path d="M1491.07 972.5 L1484.67 978.9 V981.4" stroke="#000" stroke-width="1" fill="none"/>
<path d="M1504.84 972.5 L1498.44 978.9 V981.4" stroke="#000" stroke-width="1" fill="none"/>
<path d="M1518.61 972.5 L1512.21 978.9 V981.4" stroke="#000" stroke-width="1" fill="none"/>
<path d="M1532.38 972.5 L1525.98 978.9 V981.4" stroke="#000" stroke-width="1" fill="none"/>
<path d="M1546.15 972.5 L1539.75 978.9 V981.4" stroke="#000" stroke-width="1" fill="none"/>
<path d="M1559.92 972.5 L1553.52 978.9 V981.4" stroke="#000" stroke-width="1" fill="none"/>
<path d="M1573.69 972.5 L1567.29 978.9 V981.4" stroke="#000" stroke-width="1" fill="none"/>
<path d="M1587.46 972.5 L1581.06 978.9 V981.4" stroke="#000" stroke-width="1" fill="none"/>
<path d="M1601.23 972.5 L1594.83 978.9 V981.4" stroke="#000" stroke-width="1" fill="none"/>
<path d="M1615.00 972.5 L1608.60 978.9 V981.4" stroke="#000" stroke-width="1" fill="none"/>
<path d="M1628.77 972.5 L1622.37 978.9 V981.4" stroke="#000" stroke-width="1" fill="none"/>
<path d="M1642.54 972.5 L1636.14 978.9 V981.4" stroke="#000" stroke-width="1" fill="none"/>
<path d="M1656.31 972.5 L1649.91 978.9 V981.4" stroke="#000" stroke-width="1" fill="none"/>
<path d="M1670.08 972.5 L1663.68 978.9 V981.4" stroke="#000" stroke-width="1" fill="none"/>
<path d="M1683.85 972.5 L1677.45 978.9 V981.4" stroke="#000" stroke-width="1" fill="none"/>
<path d="M1697.62 972.5 L1691.22 978.9 V981.4" stroke="#000" stroke-width="1" fill="none"/>
<path d="M1711.39 972.5 L1704.99 978.9 V981.4" stroke="#000" stroke-width="1" fill="none"/>
<path d="M1725.16 972.5 L1718.76 978.9 V981.4" stroke="#000" stroke-width="1" fill="none"/>
</svg>
<div class="a" style="left:914px;top:1002px;width:891px;height:11px;background:#f0f0f0"></div>
<div class="a" style="left:914px;top:1003px;width:97px;height:10px;background:#e6e6e6;border:1px solid #bcbcbc;border-bottom:none"></div>
<div class="a" style="left:915px;top:1004px;width:54px;height:9px;background:#06b025"></div>
<div class="a" style="left:1019px;top:1006px;width:1px;height:7px;background:#d0d0d0"></div>
<div class="a" style="left:1151px;top:1006px;width:1px;height:7px;background:#d0d0d0"></div>
<div class="a" style="left:1248px;top:1006px;width:1px;height:7px;background:#d0d0d0"></div>
<div class="a" style="left:1302px;top:1006px;width:1px;height:7px;background:#d0d0d0"></div>
<div class="a" style="left:1024px;top:1005px;font-size:11.2px;line-height:16px;white-space:nowrap">20337 MB Memory Free</div>
<div class="a" style="left:1156px;top:1005px;font-size:11.2px;line-height:16px;white-space:nowrap">100% CPU Usage</div>
<div class="a" style="left:1253px;top:1005px;font-size:11.2px;line-height:16px;white-space:nowrap">1460 FPS</div>
</body></html>
